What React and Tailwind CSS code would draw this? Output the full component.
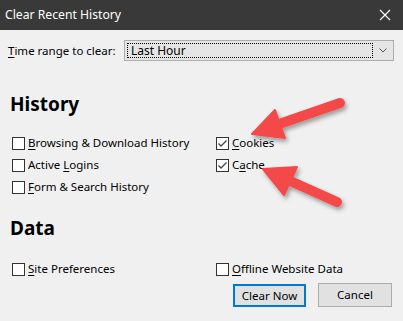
import React from 'react';

const Key = ({ children }) => <span className="underline underline-offset-2">{children}</span>;

const Box = ({ checked }) => (
  <span className="w-[13px] h-[13px] border border-[#333] bg-white flex items-center justify-center shrink-0">
    {checked && (
      <svg width="11" height="11" viewBox="0 0 11 11">
        <path d="M1.5 5.5 L4 8 L9.5 2.5" fill="none" stroke="#444" strokeWidth="1.3" />
      </svg>
    )}
  </span>
);

const Check = ({ checked, children }) => (
  <div className="flex items-center gap-[3px] h-[22px]">
    <Box checked={checked} />
    <span>{children}</span>
  </div>
);

const Arrows = () => (
  <svg className="absolute left-0 top-0 pointer-events-none" width="403" height="321">
    <defs>
      <filter id="sh" x="-20%" y="-20%" width="140%" height="140%">
        <feDropShadow dx="2" dy="3" stdDeviation="2" floodColor="#000" floodOpacity="0.35" />
      </filter>
    </defs>
    <g filter="url(#sh)" fill="#f44848" stroke="#f44848">
      <line x1="340" y1="103" x2="282" y2="123" strokeWidth="10" strokeLinecap="round" />
      <polygon points="252,134 285,138 275,110" strokeWidth="2" strokeLinejoin="round" />
      <line x1="337" y1="202" x2="288" y2="180" strokeWidth="10" strokeLinecap="round" />
      <polygon points="263,169 297,167 284,195" strokeWidth="2" strokeLinejoin="round" />
    </g>
  </svg>
);

export default function App() {
  return (
    <div className="relative w-[403px] h-[321px] bg-[#f0f0f0] flex flex-col text-[11.5px] text-black font-['Noto_Sans',sans-serif]">
      <div className="h-[30px] bg-[#393939] flex items-center justify-between pl-[5px] pr-[12px] text-white text-[12.2px]">
        <span>Clear Recent History</span>
        <svg width="12" height="12" viewBox="0 0 12 12">
          <path d="M1 1 L11 11 M11 1 L1 11" stroke="#fff" strokeWidth="1.2" />
        </svg>
      </div>

      <div className="flex flex-col px-[8px]">
        <div className="flex items-center mt-[10px] h-[21px]">
          <span className="w-[116px]"><Key>T</Key>ime range to clear:</span>
          <div className="w-[270px] h-[21px] border border-[#adadad] bg-[#e5e5e5] flex items-center pl-[2px] pr-[6px]">
            <div className="flex-1 h-[15px] border border-dotted border-black flex items-center pl-[3px] text-[12px]">Last Hour</div>
            <svg className="ml-[6px]" width="8" height="5" viewBox="0 0 8 5">
              <path d="M0.5 0.5 L4 4 L7.5 0.5" fill="none" stroke="#555" strokeWidth="1" />
            </svg>
          </div>
        </div>

        <h2 className="mt-[32px] ml-[2px] text-[19px] font-bold leading-[22px]">History</h2>

        <div className="grid grid-cols-[204px_1fr] mt-[17px] pl-[4px]">
          <div className="flex flex-col">
            <Check><Key>B</Key>rowsing &amp; Download History</Check>
            <Check>Active <Key>L</Key>ogins</Check>
            <Check><Key>F</Key>orm &amp; Search History</Check>
          </div>
          <div className="flex flex-col">
            <Check checked><Key>C</Key>ookies</Check>
            <Check checked>C<Key>a</Key>che</Check>
          </div>
        </div>

        <h2 className="mt-[19px] ml-[2px] text-[19px] font-bold leading-[22px]">Data</h2>

        <div className="grid grid-cols-[204px_1fr] mt-[19px] pl-[4px]">
          <Check><Key>S</Key>ite Preferences</Check>
          <Check><Key>O</Key>ffline Website Data</Check>
        </div>

        <div className="flex justify-end items-start gap-[12px] mt-[3px] pr-[3px]">
          <button className="w-[73px] h-[23px] mt-[1px] border-2 border-[#0078d7] bg-[#e1e1e1]">Clear Now</button>
          <button className="w-[74px] h-[24px] border border-[#adadad] bg-[#e1e1e1]">Cancel</button>
        </div>
      </div>

      <Arrows />
    </div>
  );
}
